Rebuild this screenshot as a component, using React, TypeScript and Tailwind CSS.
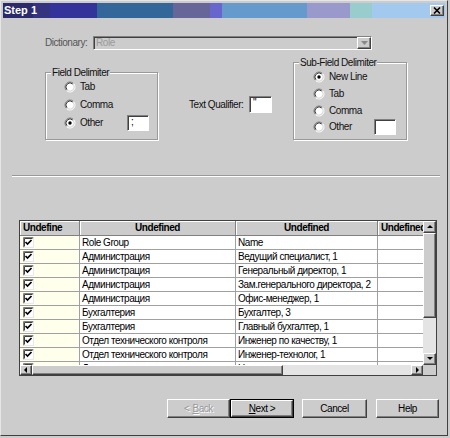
import React from 'react';

const ui = "font-['Liberation_Sans',Arial,sans-serif] text-[10px] tracking-[-0.45px] leading-none";
const raised =
  'bg-[#cccccc] border border-t-white border-l-white border-r-[#404040] border-b-[#404040] shadow-[inset_-1px_-1px_0_#808080]';
const sunken =
  'border border-t-[#808080] border-l-[#808080] border-r-white border-b-white shadow-[inset_1px_1px_0_#404040]';

const rows = [
  ['Role Group', 'Name'],
  ['Администрация', 'Ведущий специалист, 1'],
  ['Администрация', 'Генеральный директор, 1'],
  ['Администрация', 'Зам.генерального директора, 2'],
  ['Администрация', 'Офис-менеджер, 1'],
  ['Бухгалтерия', 'Бухгалтер, 3'],
  ['Бухгалтерия', 'Главный бухгалтер, 1'],
  ['Отдел технического контроля', 'Инженер по качеству, 1'],
  ['Отдел технического контроля', 'Инженер-технолог, 1'],
  ['Дирекция', 'Начальник отдела технического контроля, 1'],
];

function Radio({ checked }: { checked?: boolean }) {
  return (
    <svg width="12" height="12" viewBox="0 0 12 12" className="shrink-0">
      <circle cx="6" cy="6" r="4" fill="#fff" />
      <path d="M2.46 9.54A5 5 0 0 1 9.54 2.46" stroke="#808080" fill="none" />
      <path d="M9.54 2.46A5 5 0 0 1 2.46 9.54" stroke="#fff" fill="none" />
      <path d="M3.17 8.83A4 4 0 0 1 8.83 3.17" stroke="#404040" fill="none" />
      <path d="M8.83 3.17A4 4 0 0 1 3.17 8.83" stroke="#dcdcdc" fill="none" />
      {checked && <circle cx="6" cy="6" r="1.7" fill="#000" />}
    </svg>
  );
}

function RadioRow({
  label,
  checked,
  input,
  textWidth,
}: {
  label: string;
  checked?: boolean;
  input?: boolean;
  textWidth?: string;
}) {
  return (
    <div className={`flex items-center ${input ? 'h-[16px]' : 'h-[12px]'}`}>
      <Radio checked={checked} />
      <span className={`ml-[4px] text-[#111] ${textWidth ?? ''}`}>{label}</span>
      {input && (
        <div className={`w-[22px] h-[16px] bg-white ${sunken} pl-[3px] pt-[1px] text-[#000]`}>
          {checked ? ';' : ''}
        </div>
      )}
    </div>
  );
}

function GroupBox({
  title,
  className,
  children,
}: {
  title: string;
  className: string;
  children: React.ReactNode;
}) {
  return (
    <div
      className={`relative border border-[#999999] shadow-[1px_1px_0_#ffffff,inset_1px_1px_0_#ffffff] ${className}`}
    >
      <span className="absolute -top-[5px] left-[5px] bg-[#cccccc] px-[1px] text-[#111]">
        {title}
      </span>
      {children}
    </div>
  );
}

function Arrow({ dir }: { dir: 'up' | 'down' | 'left' | 'right' }) {
  const pts = {
    up: '1,5 4,2 7,5',
    down: '1,2 4,5 7,2',
    left: '5,1 2,4 5,7',
    right: '3,1 6,4 3,7',
  }[dir];
  return (
    <svg width="8" height="8" viewBox="0 0 8 8">
      <polygon points={pts} fill="#000" />
    </svg>
  );
}

function ScrollBtn({ dir, className }: { dir: 'up' | 'down' | 'left' | 'right'; className: string }) {
  return (
    <div className={`${raised} ${className} flex items-center justify-center shrink-0`}>
      <Arrow dir={dir} />
    </div>
  );
}

function Check() {
  return (
    <svg width="11" height="11" viewBox="0 0 11 11" className="shrink-0">
      <rect x="0" y="0" width="11" height="11" fill="#fff" />
      <path d="M0.5 10.5V0.5H10.5" stroke="#808080" fill="none" />
      <path d="M1.5 9.5V1.5H9.5" stroke="#404040" fill="none" />
      <path d="M0.5 10.5H10.5V0.5" stroke="#e8e8e8" fill="none" />
      <polyline points="2.5,5 4.5,7 8.5,3" stroke="#000" strokeWidth="1.7" fill="none" />
    </svg>
  );
}

function DataGrid() {
  return (
    <div className="mt-[43px] ml-[16px] w-[418px] h-[156px] border border-[#404040] flex bg-white">
      <div className="flex flex-col w-[403px]">
        <div className="h-[144px] overflow-hidden font-['Liberation_Sans',Arial,sans-serif] text-[10px] leading-none">
          <div className="flex h-[15px] w-[460px] font-bold text-black">
            <div className="w-[60px] bg-[#cccccc] border-r border-b border-[#808080] shadow-[inset_1px_1px_0_#fff] pl-[3px] flex items-center">
              Undefine
            </div>
            <div className="w-[156px] bg-[#cccccc] border-r border-b border-[#808080] shadow-[inset_1px_1px_0_#fff] flex items-center justify-center">
              Undefined
            </div>
            <div className="w-[142px] bg-[#cccccc] border-r border-b border-[#808080] shadow-[inset_1px_1px_0_#fff] flex items-center justify-center">
              Undefined
            </div>
            <div className="w-[60px] bg-[#cccccc] border-r border-b border-[#808080] shadow-[inset_1px_1px_0_#fff] pl-[3px] flex items-center overflow-hidden whitespace-nowrap">
              Undefined
            </div>
          </div>
          {rows.map(([group, name], i) => (
            <div key={i} className="flex h-[14px] w-[460px] text-black">
              <div className="w-[60px] bg-[#ffffec] border-r border-b border-[#a0a0a0] pl-[3px] flex items-center">
                <Check />
              </div>
              <div className="w-[156px] border-r border-b border-[#a0a0a0] pl-[2px] flex items-center whitespace-nowrap overflow-hidden">
                {group}
              </div>
              <div className="w-[142px] border-r border-b border-[#a0a0a0] pl-[2px] flex items-center whitespace-nowrap overflow-hidden">
                {name}
              </div>
              <div className="w-[60px] border-r border-b border-[#a0a0a0]" />
            </div>
          ))}
        </div>
        <div className="flex h-[10px]">
          <ScrollBtn dir="left" className="w-[12px] h-[10px]" />
          <div className={`${raised} w-[251px] h-[10px]`} />
          <div className="w-[128px] h-[10px] bg-[#e4e4e4]" />
          <ScrollBtn dir="right" className="w-[12px] h-[10px]" />
        </div>
      </div>
      <div className="flex flex-col w-[13px]">
        <ScrollBtn dir="up" className="w-[13px] h-[12px]" />
        <div className={`${raised} w-[13px] h-[85px]`} />
        <div className="w-[13px] h-[35px] bg-[#e4e4e4]" />
        <ScrollBtn dir="down" className="w-[13px] h-[12px]" />
        <div className="w-[13px] h-[10px] bg-[#cccccc]" />
      </div>
    </div>
  );
}

export default function App() {
  return (
    <div className={`w-[450px] h-[438px] bg-[#cccccc] ${ui}`}>
      <div className="w-[448px] h-[436px] border border-t-[#e6e6e6] border-l-[#e6e6e6] border-r-[#404040] border-b-[#404040] p-[2px] flex flex-col">
        <div className="h-[15px] flex items-center justify-between bg-[linear-gradient(to_right,#2b2b6b_0px,#2b2b6b_30px,#333380_30px,#333380_47px,#333399_47px,#333399_94px,#336699_94px,#336699_170px,#666699_170px,#666699_207px,#6666cc_207px,#6666cc_219px,#6699cc_219px,#6699cc_304px,#9999cc_304px,#9999cc_347px,#99cccc_347px,#99cccc_369px,#a3c9ef_369px,#a3c9ef_100%)]">
          <span className="pl-[1px] text-white font-bold text-[11px] tracking-normal">Step 1</span>
          <div className={`${raised} w-[14px] h-[11px] mr-[1px] flex items-center justify-center`}>
            <svg width="8" height="7" viewBox="0 0 8 7">
              <path d="M1 0.5L7 6.5M7 0.5L1 6.5" stroke="#000" strokeWidth="1.6" />
            </svg>
          </div>
        </div>

        <div className="flex-1 flex flex-col">
          <div className="mt-[18px] ml-[42px] flex items-center h-[14px]">
            <span className="w-[48px] text-[#555555]">Dictionary:</span>
            <div className={`w-[279px] h-[14px] ${sunken} bg-[#cccccc] flex items-center justify-between`}>
              <span className="pl-[2px] text-[#9a9a9a]">Role</span>
              <div className={`${raised} w-[14px] h-[12px] flex items-center justify-center`}>
                <svg width="7" height="4" viewBox="0 0 7 4">
                  <polygon points="0,0 7,0 3.5,4" fill="#888" />
                </svg>
              </div>
            </div>
          </div>

          <div className="flex items-start ml-[42px]">
            <GroupBox title="Field Delimiter" className="mt-[22px] w-[113px] h-[68px] pl-[18px] pt-[8px]">
              <RadioRow label="Tab" />
              <div className="mt-[6px]">
                <RadioRow label="Comma" />
              </div>
              <div className="mt-[4px]">
                <RadioRow label="Other" checked input textWidth="w-[47px]" />
              </div>
            </GroupBox>

            <div className="mt-[46px] ml-[31px] w-[83px] flex items-center">
              <span className="text-[#111] w-[60px]">Text Qualifier:</span>
              <div className={`w-[23px] h-[17px] bg-white ${sunken} pl-[3px] pt-[1px] text-black`}>"</div>
            </div>

            <GroupBox title="Sub-Field Delimiter" className="mt-[12px] ml-[21px] w-[114px] h-[78px] pl-[19px] pt-[8px]">
              <RadioRow label="New Line" checked />
              <div className="mt-[5px]">
                <RadioRow label="Tab" />
              </div>
              <div className="mt-[5px]">
                <RadioRow label="Comma" />
              </div>
              <div className="mt-[2px]">
                <RadioRow label="Other" input textWidth="w-[45px]" />
              </div>
            </GroupBox>
          </div>

          <div className="mt-[35px] ml-[9px] w-[428px] border-t border-b border-t-[#999999] border-b-white" />

          <DataGrid />

          <div className="mt-[23px] ml-[164px] flex h-[19px]">
            <div className={`${raised} w-[63px] h-[19px] flex items-center justify-center text-[#999] [text-shadow:1px_1px_0_#fff]`}>
              &lt; <u className="ml-[3px]">B</u>ack
            </div>
            <div className="w-[64px] h-[19px] border border-black">
              <div className={`${raised} w-full h-full flex items-center justify-center text-black`}>
                <u>N</u>ext &gt;
              </div>
            </div>
            <div className={`${raised} ml-[8px] w-[65px] h-[19px] flex items-center justify-center text-black`}>
              Cancel
            </div>
            <div className={`${raised} ml-[9px] w-[63px] h-[19px] flex items-center justify-center text-black`}>
              Help
            </div>
          </div>
        </div>
      </div>
    </div>
  );
}
